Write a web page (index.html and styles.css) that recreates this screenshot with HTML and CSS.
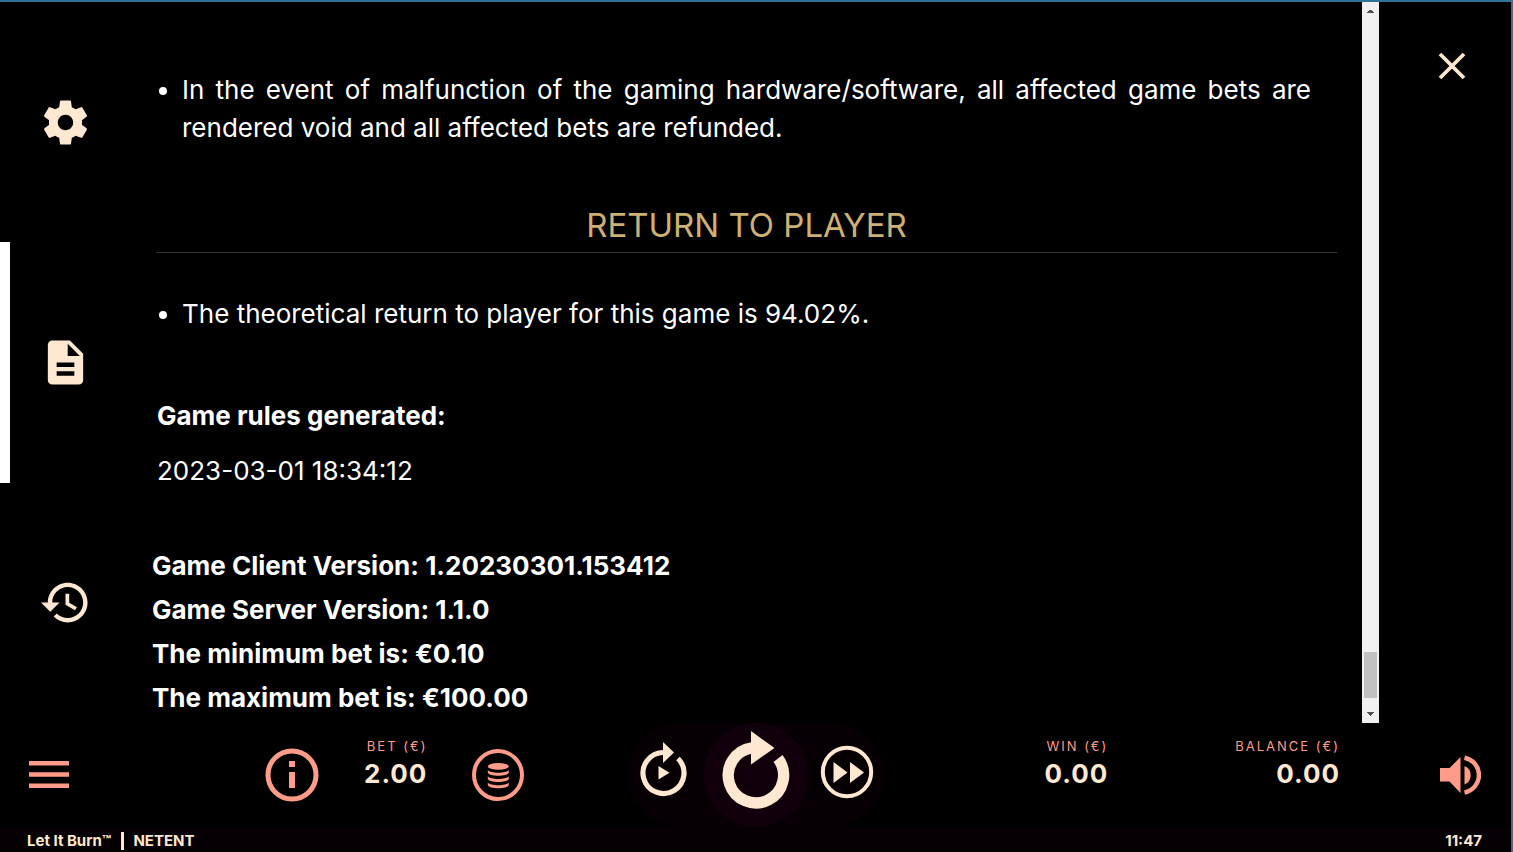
FILE: index.html
```html
<!DOCTYPE html>
<html lang="en">
<head>
    <meta charset="UTF-8">
    <meta name="viewport" content="width=device-width, initial-scale=1.0">
    <title>Let It Burn</title>
    <link rel="stylesheet" href="styles.css">
</head>
<body>
    <div class="game">
        <main class="panel">
            <nav class="tabs">
                <button type="button" class="tab" aria-label="Settings">
                    <svg class="tab-icon" viewBox="0 0 24 24"><path d="M19.43 12.98c.04-.32.07-.64.07-.98s-.03-.66-.07-.98l2.11-1.65c.19-.15.24-.42.12-.64l-2-3.46c-.12-.22-.39-.3-.61-.22l-2.49 1c-.52-.4-1.08-.73-1.69-.98l-.38-2.65C14.46 2.18 14.25 2 14 2h-4c-.25 0-.46.18-.49.42l-.38 2.65c-.61.25-1.17.59-1.69.98l-2.49-1c-.23-.09-.49 0-.61.22l-2 3.46c-.13.22-.07.49.12.64l2.11 1.65c-.04.32-.07.65-.07.98s.03.66.07.98l-2.11 1.65c-.19.15-.24.42-.12.64l2 3.46c.12.22.39.3.61.22l2.49-1c.52.4 1.08.73 1.69.98l.38 2.65c.03.24.24.42.49.42h4c.25 0 .46-.18.49-.42l.38-2.65c.61-.25 1.17-.59 1.69-.98l2.49 1c.23.09.49 0 .61-.22l2-3.46c.12-.22.07-.49-.12-.64l-2.11-1.65zM12 15.5c-1.93 0-3.5-1.57-3.5-3.5s1.57-3.5 3.5-3.5 3.5 1.57 3.5 3.5-1.57 3.5-3.5 3.5z"/></svg>
                </button>
                <button type="button" class="tab active" aria-label="Game rules">
                    <svg class="tab-icon" viewBox="0 0 24 24"><path d="M14 2H6c-1.1 0-1.99.9-1.99 2L4 20c0 1.1.89 2 1.99 2H18c1.1 0 2-.9 2-2V8l-6-6zm2 16H8v-2h8v2zm0-4H8v-2h8v2zm-3-5V3.5L18.5 9H13z"/></svg>
                </button>
                <button type="button" class="tab" aria-label="Game history">
                    <svg class="tab-icon" viewBox="0 0 24 24"><path d="M13 3c-4.970 0-9 4.030-9 9H.9l4.200 4.200L9.300 12H6c0-3.870 3.130-7 7-7s7 3.130 7 7-3.130 7-7 7c-1.930 0-3.680-.79-4.940-2.060l-1.420 1.420C8.270 19.990 10.510 21 13 21c4.970 0 9-4.030 9-9s-4.030-9-9-9zm-1 5v5l4.280 2.540.9-1.400-3.500-2.080V8H12z"/></svg>
                </button>
            </nav>
            <section class="rules">
                <ul>
                    <li>In the event of malfunction of the gaming hardware/software, all affected game bets are rendered void and all affected bets are refunded.</li>
                </ul>
                <h2>RETURN TO PLAYER</h2>
                <ul>
                    <li>The theoretical return to player for this game is 94.02%.</li>
                </ul>
                <div class="generated">
                    <p><b>Game rules generated:</b></p>
                    <p>2023-03-01 18:34:12</p>
                </div>
                <div class="versions">
                    <p>Game Client Version: 1.20230301.153412</p>
                    <p>Game Server Version: 1.1.0</p>
                    <p>The minimum bet is: €0.10</p>
                    <p>The maximum bet is: €100.00</p>
                </div>
            </section>
            <div class="scrollbar">
                <svg class="arrow" viewBox="0 0 17 17"><path d="M5 11h7v-1h-1v-1h-1v-1H7v1H6v1H5z"/></svg>
                <div class="track"><div class="thumb"></div></div>
                <svg class="arrow" viewBox="0 0 17 17"><path d="M5 6h7v1h-1v1h-1v1H9v1H8v-1H7v-1H6v-1H5z"/></svg>
            </div>
            <div class="close-area">
                <button type="button" class="close" aria-label="Close">
                    <svg viewBox="0 0 28 28" width="28" height="28"><path d="M2 2l24 24M26 2L2 26" fill="none" stroke="#ffe8d1" stroke-width="3.800"/></svg>
                </button>
            </div>
        </main>

        <div class="controls">
            <div class="left">
                <button type="button" class="menu" aria-label="Menu">
                    <svg viewBox="0 0 40 28" width="40" height="28"><path d="M0 0h40v4.600H0zM0 11.200h40v4.600H0zM0 22.400h40v4.600H0z"/></svg>
                </button>
                <button type="button" class="info" aria-label="Info">
                    <svg viewBox="0 0 54 54" width="54" height="54"><circle cx="27" cy="27" r="24" fill="none" stroke="#ff9b89" stroke-width="5"/><path d="M24 13h6v6h-6zM24 24h6v16h-6z"/></svg>
                </button>
                <div class="amount bet"><span class="name">BET (€)</span><span class="value">2.00</span></div>
                <button type="button" class="coins" aria-label="Bet settings">
                    <svg viewBox="0 0 52 52" width="52" height="52"><circle cx="26" cy="26" r="24" fill="none" stroke="#ff9b89" stroke-width="4"/><ellipse cx="26.300" cy="17.400" rx="10.500" ry="3.300"/><path d="M15.800 21c3 3.600 18 3.600 21 0v2.500c-1 4.400-20 4.400-21 0zM15.800 27.200c3 3.600 18 3.600 21 0v2.500c-1 4.400-20 4.400-21 0zM15.800 33.500c3 3.600 18 3.600 21 0v2.500c-1 4.400-20 4.400-21 0z"/></svg>
                </button>
            </div>
            <div class="spin-group">
                <button type="button" class="auto" aria-label="Autoplay">
                    <svg viewBox="0 0 48 56" width="48" height="56"><path d="M24.500 11.500A20.500 20.500 0 1 0 39 17.500" fill="none" stroke="#ffe8d1" stroke-width="5.200"/><path d="M24 1l11 10.500L24 22zM19.500 25L30.500 31.700 19.500 38.500z"/></svg>
                </button>
                <button type="button" class="spin" aria-label="Spin">
                    <svg viewBox="0 0 104 104" width="104" height="104"><path d="M48 24.800A27.700 27.700 0 1 0 74 35.500" fill="none" stroke="#ffe8d1" stroke-width="11.300"/><path d="M47 8l23.500 17L47 41.500z"/></svg>
                </button>
                <button type="button" class="fast" aria-label="Fast play">
                    <svg viewBox="0 0 54 54" width="54" height="54"><circle cx="27" cy="27" r="24.200" fill="none" stroke="#ffe8d1" stroke-width="4"/><path d="M13.500 17l14 10.500-14 10.500zM30 17l14 10.500L30 38z"/></svg>
                </button>
            </div>
            <div class="right">
                <div class="amount win"><span class="name">WIN (€)</span><span class="value">0.00</span></div>
                <div class="amount balance"><span class="name">BALANCE (€)</span><span class="value">0.00</span></div>
                <button type="button" class="sound" aria-label="Sound">
                    <svg viewBox="0 0 41 40" width="41" height="40"><path d="M0 13h9.500L20.500 2v36L9.500 26.500H0zM24.500 11a10 10 0 0 1 0 18.500z"/><path d="M24.500 2.700a17.700 17.700 0 0 1 0 34.800" fill="none" stroke="#ff9b89" stroke-width="4.500"/></svg>
                </button>
            </div>
        </div>

        <footer class="status">
            <span>Let It Burn™</span><span class="divider"></span><span>NETENT</span>
            <time>11:47</time>
        </footer>
    </div>
</body>
</html>
```
FILE: styles.css
```css
* {
    box-sizing: border-box;
}
body {
    margin: 0;
    background-color: #000;
    color: #fff;
    font-family: Inter, "Liberation Sans", sans-serif;
}
.game {
    min-height: 100vh;
    display: flex;
    flex-direction: column;
    border-top: 2px solid #2f7399;
    border-right: 2px solid #2f7399;
    padding-bottom: 1px;
}
button {
    margin: 0;
    padding: 0;
    border: none;
    background: none;
    cursor: pointer;
}
svg {
    display: block;
    fill: #ffe8d1;
}

/* rules panel */
.panel {
    flex: 1;
    display: flex;
}
.tabs {
    width: 130px;
    display: flex;
    flex-direction: column;
}
.tab {
    flex: 1;
    display: flex;
    align-items: center;
    justify-content: center;
    border-left: 10px solid transparent;
    padding-right: 10px;
}
.tab.active {
    border-left-color: #fff;
}
.tab-icon {
    width: 53px;
    height: 53px;
}
.rules {
    flex: 1;
    padding: 69px 25px 0 26px;
    font-size: 26px;
    line-height: 38px;
}
.rules ul {
    margin: 0;
    padding: 0 26px;
    text-align: justify;
}
.rules h2 {
    margin: 54px 0 42px;
    padding-bottom: 3px;
    border-bottom: 1px solid #333;
    color: #cdb074;
    font-size: 33px;
    font-weight: 400;
    line-height: 48px;
    text-align: center;
}
.rules p {
    margin: 0;
}
.generated {
    margin-top: 64px;
    padding-left: 1px;
}
.generated p + p {
    margin-top: 17px;
}
.versions {
    margin: 54px 0 0 -4px;
    font-weight: 700;
    line-height: 44px;
}
.scrollbar {
    width: 17px;
    display: flex;
    flex-direction: column;
    background-color: #f1f1f1;
}
.arrow {
    width: 17px;
    height: 17px;
    fill: #505050;
}
.track {
    flex: 1;
    display: flex;
    flex-direction: column;
    justify-content: flex-end;
    padding: 0 2px 8px;
}
.thumb {
    height: 46px;
    background-color: #c1c1c1;
}
.close-area {
    width: 132px;
    padding: 50px 0 0 59px;
}

/* bottom controls */
.controls {
    display: grid;
    grid-template-columns: 1fr 256px 1fr;
    height: 104px;
}
.left,
.right {
    display: flex;
    align-items: center;
}
.left svg,
.right svg {
    fill: #ff9b89;
}
.left {
    padding-left: 29px;
}
.info {
    margin-left: 196px;
}
.bet {
    margin-left: 45px;
}
.coins {
    margin-left: 45px;
}
.right {
    justify-content: flex-end;
    padding-right: 30px;
}
.balance {
    margin-left: 127px;
}
.sound {
    margin-left: 100px;
}
.amount {
    display: flex;
    flex-direction: column;
    align-items: flex-end;
    padding-bottom: 22px;
}
.name {
    color: #ff9b89;
    font-size: 13px;
    line-height: 20px;
    letter-spacing: 2px;
}
.value {
    color: #ffe8d1;
    font-size: 26px;
    font-weight: 700;
    line-height: 36px;
    letter-spacing: 1px;
}
.spin-group {
    display: flex;
    justify-content: space-between;
    padding: 0 10px 0 11px;
    background-color: #060004;
    border-radius: 52px;
}
.auto {
    padding-bottom: 12px;
}
.fast {
    padding-bottom: 6px;
}
.spin {
    margin-left: 5px;
    background-color: #11000b;
    border-radius: 50%;
}

/* status bar */
.status {
    display: flex;
    align-items: center;
    height: 24px;
    padding: 3px 29px 0 27px;
    background-color: #060004;
    color: #ffe8d1;
    font-size: 15px;
    font-weight: 700;
}
.divider {
    width: 3px;
    height: 18px;
    margin: 0 9px 0 10px;
    background-color: #ffe8d1;
}
.status time {
    margin-left: auto;
}
```
